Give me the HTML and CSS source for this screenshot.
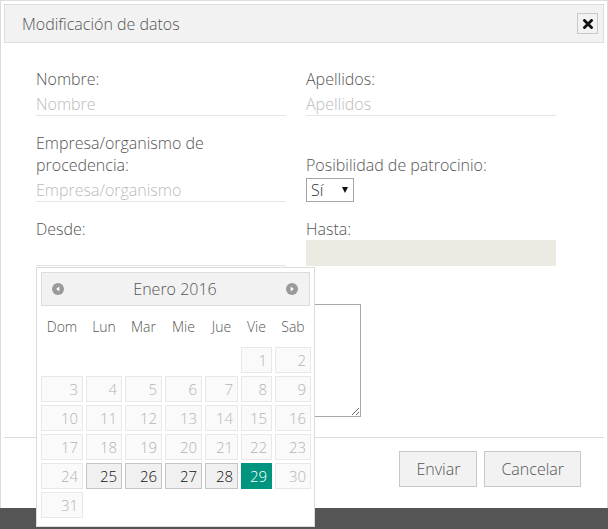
FILE: index.html
```html
<!DOCTYPE html>
<html lang="es">
<head>
<meta charset="utf-8">
<title>Modificación de datos</title>
<link rel="stylesheet" href="styles.css">
</head>
<body>
<div class="dialog">
  <div class="titlebar">
    <span class="title">Modificación de datos</span>
    <button class="close" type="button" aria-label="Cerrar">
      <svg width="10" height="10" viewBox="0 0 10 10"><path d="M1.5 1.5 L8.5 8.5 M8.5 1.5 L1.5 8.5" stroke="#111" stroke-width="2.8" stroke-linecap="square"/></svg>
    </button>
  </div>
  <form class="form">
    <div class="row">
      <div class="field">
        <label class="label">Nombre:</label>
        <input class="input" type="text" placeholder="Nombre">
      </div>
      <div class="field">
        <label class="label">Apellidos:</label>
        <input class="input" type="text" placeholder="Apellidos">
      </div>
    </div>
    <div class="row">
      <div class="field">
        <label class="label">Empresa/organismo de<br>procedencia:</label>
        <input class="input" type="text" placeholder="Empresa/organismo">
      </div>
      <div class="field">
        <label class="label">Posibilidad de patrocinio:</label>
        <div class="select"><select><option>Sí</option><option>No</option></select></div>
      </div>
    </div>
    <div class="row row-dates">
      <div class="field">
        <label class="label">Desde:</label>
        <input class="input" type="text">
      </div>
      <div class="field">
        <label class="label">Hasta:</label>
        <input class="input disabled" type="text" disabled>
      </div>
    </div>
    <div class="field wide">
      <textarea class="textarea" aria-label="Observaciones"></textarea>
    </div>
  </form>
  <div class="footer">
    <button class="btn" type="button">Enviar</button>
    <button class="btn" type="button">Cancelar</button>
  </div>

  <div class="datepicker">
    <div class="dp-header">
      <svg class="dp-nav" width="12" height="12" viewBox="0 0 12 12"><circle cx="6" cy="6" r="6" fill="#9a9a9a"/><path d="M7.3 3.4 L4.2 6 L7.3 8.6 Z" fill="#fff"/></svg>
      <span class="dp-title">Enero 2016</span>
      <svg class="dp-nav" width="12" height="12" viewBox="0 0 12 12"><circle cx="6" cy="6" r="6" fill="#9a9a9a"/><path d="M4.7 3.4 L7.8 6 L4.7 8.6 Z" fill="#fff"/></svg>
    </div>
    <div class="dp-grid">
      <div class="dp-dow">Dom</div><div class="dp-dow">Lun</div><div class="dp-dow">Mar</div><div class="dp-dow">Mie</div><div class="dp-dow">Jue</div><div class="dp-dow">Vie</div><div class="dp-dow">Sab</div>

      <div class="dp-empty"></div><div class="dp-empty"></div><div class="dp-empty"></div><div class="dp-empty"></div><div class="dp-empty"></div>
      <div class="dp-day off">1</div><div class="dp-day off">2</div>

      <div class="dp-day off">3</div><div class="dp-day off">4</div><div class="dp-day off">5</div><div class="dp-day off">6</div><div class="dp-day off">7</div><div class="dp-day off">8</div><div class="dp-day off">9</div>

      <div class="dp-day off">10</div><div class="dp-day off">11</div><div class="dp-day off">12</div><div class="dp-day off">13</div><div class="dp-day off">14</div><div class="dp-day off">15</div><div class="dp-day off">16</div>

      <div class="dp-day off">17</div><div class="dp-day off">18</div><div class="dp-day off">19</div><div class="dp-day off">20</div><div class="dp-day off">21</div><div class="dp-day off">22</div><div class="dp-day off">23</div>

      <div class="dp-day off">24</div><div class="dp-day on">25</div><div class="dp-day on">26</div><div class="dp-day on">27</div><div class="dp-day on">28</div><div class="dp-day today">29</div><div class="dp-day off">30</div>

      <div class="dp-day off">31</div>
    </div>
  </div>
</div>
</body>
</html>
```
FILE: styles.css
```css
* { box-sizing: border-box; }
html, body { margin: 0; padding: 0; }
body {
  background: #555;
  width: 608px;
  height: 529px;
  overflow: hidden;
  font-family: "Open Sans", "DejaVu Sans", sans-serif;
  color: #555;
}
.dialog {
  position: relative;
  width: 608px;
  height: 508px;
  background: #fff;
  border: 1px solid #dcdcdc;
  border-bottom: none;
  padding: 3px 3px 0 3px;
}
.titlebar {
  height: 39px;
  background: #f2f2f2;
  border: 1px solid #dcdcdc;
  display: flex;
  align-items: center;
  justify-content: space-between;
  padding: 0 5px 0 17px;
}
.title {
  font-size: 16px;
  color: #555;
  font-weight: 300;
}
.close {
  width: 21px;
  height: 21px;
  border: 1px solid #c8c8c8;
  background: #f2f2f2;
  padding: 0;
  display: flex;
  align-items: center;
  justify-content: center;
}
.form {
  padding: 25px 0 0 32px;
  height: 394px;
}
.row {
  display: flex;
  gap: 20px;
  align-items: flex-end;
  margin-bottom: 16px;
}
.row + .row-dates { margin-top: 1px; }
.field {
  width: 250px;
  display: flex;
  flex-direction: column;
}
.field.wide { width: 325px; padding-top: 22px; }
.label {
  font-size: 16px;
  line-height: 22px;
  font-weight: 300;
  color: #555;
}
.input {
  height: 26px;
  border: none;
  border-bottom: 1px solid #e6e6e6;
  font-family: inherit;
  font-size: 16px;
  font-weight: 300;
  padding: 3px 0 0 0;
  color: #555;
  outline: none;
  background: #fff;
}
.input::placeholder { color: #bbb; }
.input.disabled { background: #ebebe4; border-bottom-color: #ebebe4; }
.select {
  position: relative;
  width: 48px;
  height: 24px;
  margin-top: 2px;
}
.select select {
  appearance: none;
  -webkit-appearance: none;
  width: 48px;
  height: 24px;
  border: 1px solid #a6a6a6;
  border-radius: 0;
  background: #fff;
  font-family: inherit;
  font-size: 16px;
  font-weight: 300;
  color: #333;
  padding: 0 0 0 4px;
}
.select::after {
  content: "";
  position: absolute;
  right: 6px;
  top: 9px;
  border-left: 3.5px solid transparent;
  border-right: 3.5px solid transparent;
  border-top: 6px solid #111;
}
.textarea {
  width: 325px;
  height: 113px;
  border: 1px solid #a9a9a9;
  font-family: inherit;
  resize: vertical;
  margin: 0;
}
.footer {
  border-top: 1px solid #dcdcdc;
  height: 70px;
  display: flex;
  justify-content: flex-end;
  align-items: flex-start;
  gap: 7px;
  padding: 13px 23px 0 0;
}
.btn {
  height: 36px;
  background: #f2f2f2;
  border: 1px solid #c8c8c8;
  font-family: inherit;
  font-size: 16px;
  font-weight: 300;
  color: #555;
  padding: 0 16px;
}
.datepicker {
  position: absolute;
  left: 35px;
  top: 266px;
  width: 279px;
  height: 260px;
  background: #fff;
  border: 1px solid #dcdcdc;
  padding: 4px;
}
.dp-header {
  height: 34px;
  background: #f2f2f2;
  border: 1px solid #dcdcdc;
  display: flex;
  align-items: center;
  justify-content: space-between;
  padding: 0 11px 1px 10px;
}
.dp-title {
  font-size: 16px;
  font-weight: 300;
  color: #555;
}
.dp-nav { display: block; }
.dp-grid {
  display: grid;
  grid-template-columns: 42px 36px 37px 37px 33px 31px 36px;
  grid-template-rows: 38px repeat(6, 26px);
  column-gap: 3px;
  row-gap: 3px;
}
.dp-dow {
  font-size: 14px;
  font-weight: 300;
  color: #555;
  text-align: center;
  display: flex;
  align-items: center;
  justify-content: center;
  padding-top: 3px;
}
.dp-day {
  font-size: 15px;
  font-weight: 300;
  text-align: right;
  padding-right: 4px;
  line-height: 24px;
  border: 1px solid #e8e8e8;
  background: #fafafa;
  color: #b4b4b4;
}
.dp-day.on {
  border-color: #c5c5c5;
  background: #f0f0f0;
  color: #111;
}
.dp-day.today {
  border-color: #00957f;
  background: #00957f;
  color: #fff;
}
```
